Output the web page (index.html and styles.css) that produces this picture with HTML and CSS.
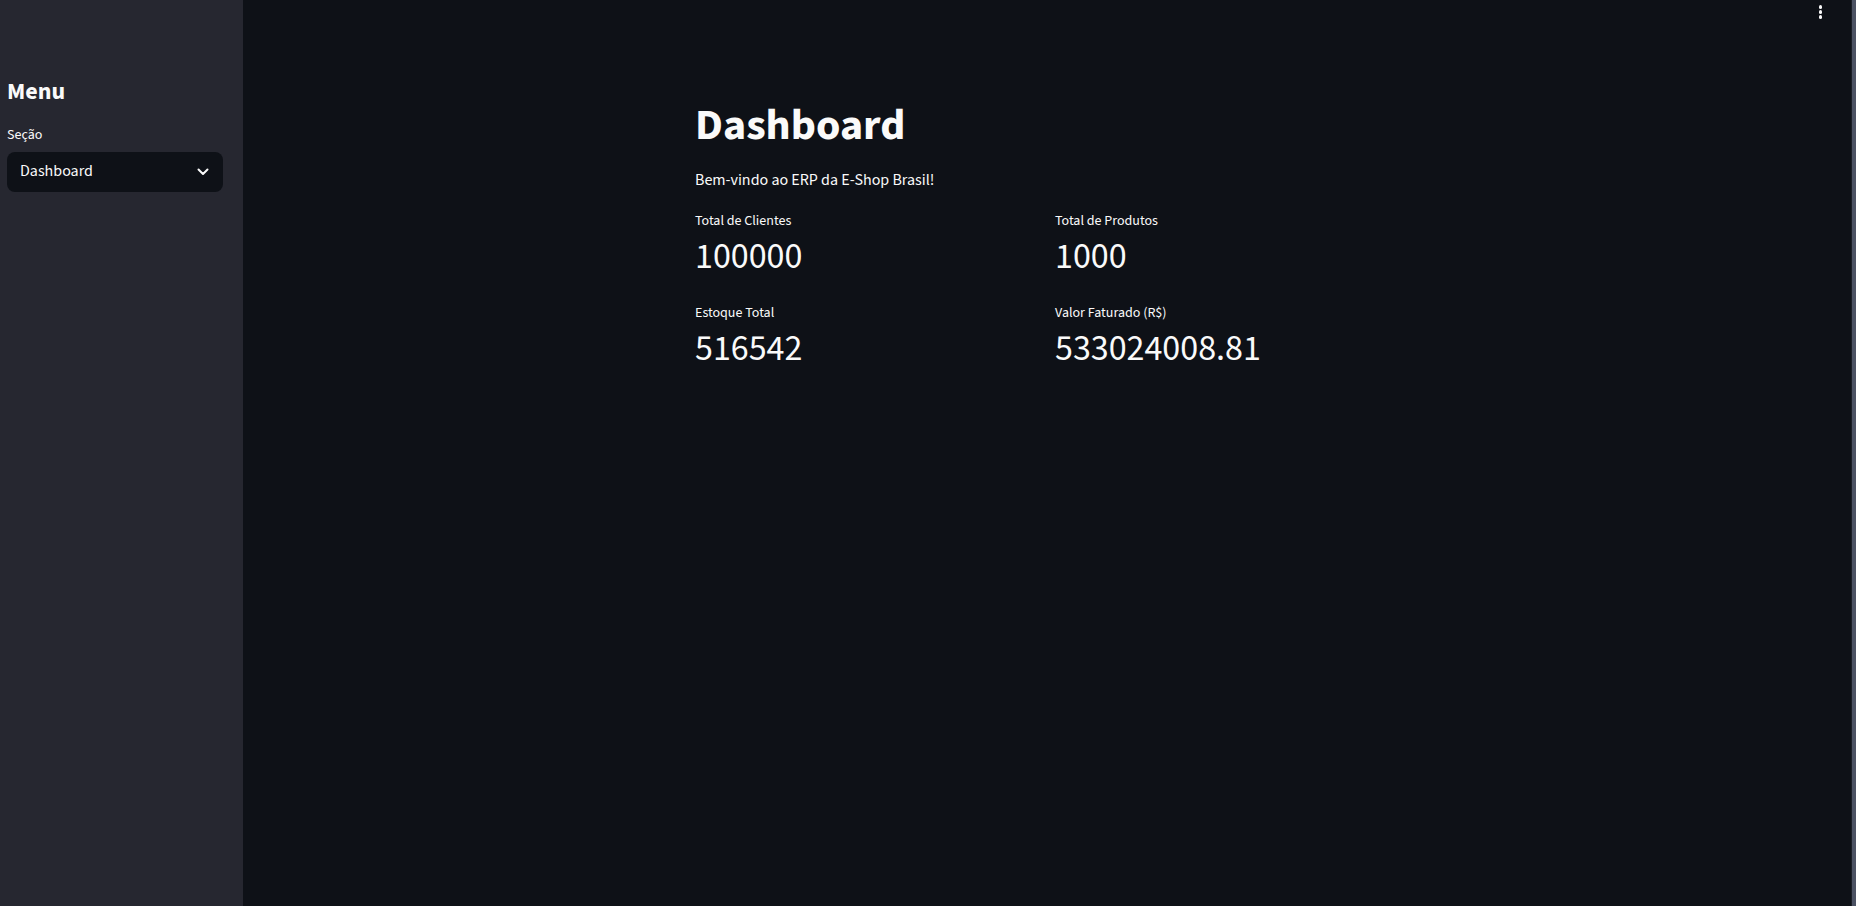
FILE: index.html
```html
<!DOCTYPE html>
<html lang="pt-BR">
<head>
<meta charset="utf-8">
<title>Dashboard</title>
<link rel="stylesheet" href="styles.css">
</head>
<body>
<div class="app">
  <aside class="sidebar">
    <h2 class="side-title">Menu</h2>
    <div class="field">
      <label class="field-label">Seção</label>
      <div class="select">
        <span class="select-value">Dashboard</span>
        <svg class="chevron" width="12" height="8" viewBox="0 0 12 8"><path d="M1.5 1.5 L6 6 L10.5 1.5" fill="none" stroke="#fafafa" stroke-width="2" stroke-linecap="round" stroke-linejoin="round"/></svg>
      </div>
    </div>
  </aside>
  <main class="main">
    <div class="menu-dots"><span></span><span></span><span></span></div>
    <div class="block">
      <h1 class="title">Dashboard</h1>
      <p class="intro">Bem-vindo ao ERP da E-Shop Brasil!</p>
      <div class="metrics">
        <div class="metric">
          <div class="metric-label">Total de Clientes</div>
          <div class="metric-value">100000</div>
        </div>
        <div class="metric">
          <div class="metric-label">Total de Produtos</div>
          <div class="metric-value">1000</div>
        </div>
        <div class="metric">
          <div class="metric-label">Estoque Total</div>
          <div class="metric-value">516542</div>
        </div>
        <div class="metric">
          <div class="metric-label">Valor Faturado (R$)</div>
          <div class="metric-value">533024008.81</div>
        </div>
      </div>
    </div>
  </main>
  <div class="scrollbar"></div>
</div>
</body>
</html>
```
FILE: styles.css
```css
* { box-sizing: border-box; }
html, body { margin: 0; padding: 0; height: 100%; }
body {
  background: #0e1117;
  color: #fafafa;
  font-family: "Source Sans Pro", "Source Sans 3", Lato, "Noto Sans", sans-serif;
  overflow: hidden;
}
.app {
  display: flex;
  height: 906px;
}
.sidebar {
  width: 243px;
  flex: none;
  background: #262730;
  padding: 78px 20px 0 7px;
}
.side-title {
  margin: 0;
  font-size: 24px;
  line-height: 1.2;
  font-weight: 700;
}
.field { margin-top: 18.5px; }
.field-label {
  display: block;
  font-size: 14px;
  line-height: 21px;
  margin-bottom: 5.3px;
}
.select {
  height: 40px;
  width: 216px;
  background: #0e1117;
  border-radius: 8px;
  display: flex;
  align-items: center;
  justify-content: space-between;
  padding: 0 14px 0 13px;
}
.select-value {
  font-size: 16px;
  line-height: 1.2;
}
.chevron { display: block; }
.main {
  flex: 1;
  position: relative;
  padding-top: 99.5px;
}
.menu-dots {
  position: absolute;
  top: 5px;
  right: 29px;
  display: flex;
  flex-direction: column;
  gap: 1.5px;
}
.menu-dots span {
  width: 3.5px;
  height: 3.5px;
  border-radius: 50%;
  background: #fafafa;
}
.block {
  width: 704px;
  margin: 0 auto;
}
.title {
  margin: 0;
  font-size: 44px;
  line-height: 1.2;
  font-weight: 700;
}
.intro {
  margin: 15.5px 0 0;
  font-size: 16px;
  line-height: 24px;
}
.metrics {
  margin-top: 19px;
  display: grid;
  grid-template-columns: 1fr 1fr;
  column-gap: 16px;
  row-gap: 24.3px;
}
.metric-label {
  font-size: 14px;
  line-height: 21px;
}
.metric-value {
  margin-top: 3.7px;
  font-size: 36px;
  line-height: 43px;
}
.scrollbar {
  width: 5px;
  flex: none;
  background: linear-gradient(to right, #1b1e26 0 1px, #4c5263 1px);
}
```
